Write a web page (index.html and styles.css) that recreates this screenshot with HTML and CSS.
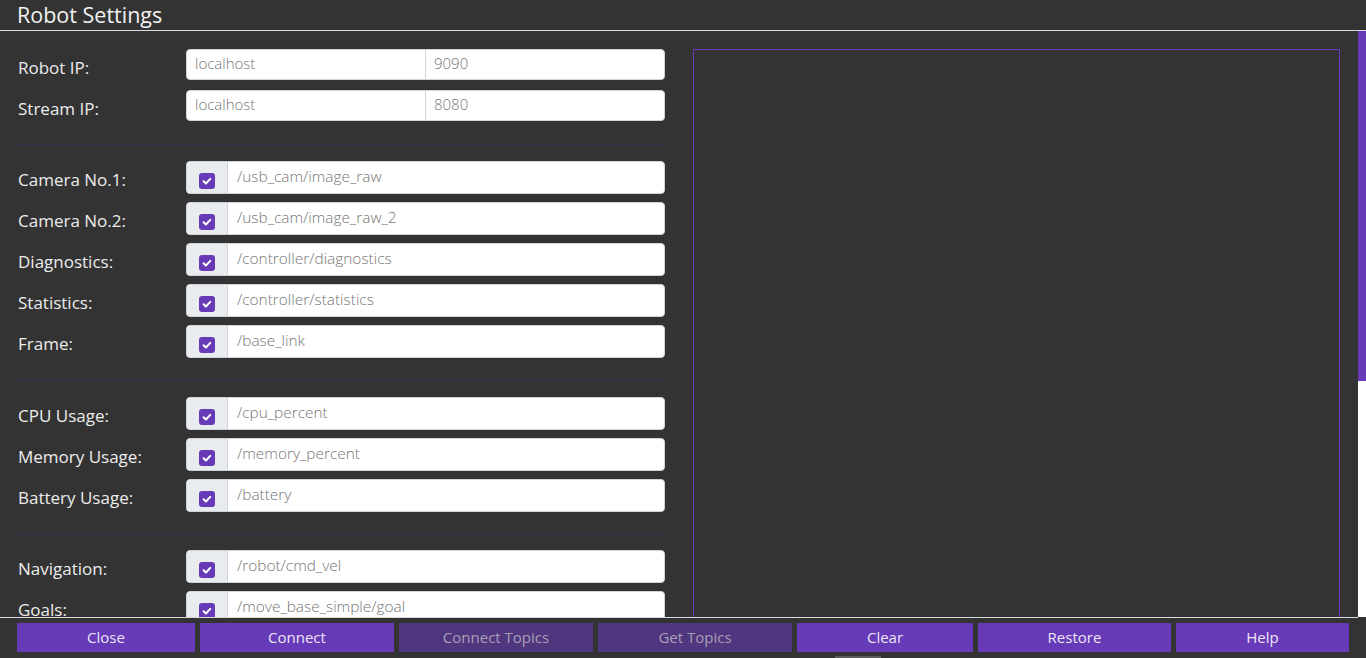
FILE: index.html
```html
<!DOCTYPE html>
<html lang="en">
<head>
<meta charset="utf-8">
<title>Robot Settings</title>
<link rel="stylesheet" href="styles.css">
</head>
<body>
<header class="topbar">
  <h1 class="title">Robot Settings</h1>
</header>
<main class="scroller">
  <div class="content">
    <section class="form-col">
      <div class="row">
        <label class="label">Robot IP:</label>
        <div class="group ip">
          <span class="field half">localhost</span>
          <span class="field half">9090</span>
        </div>
      </div>
      <div class="row">
        <label class="label">Stream IP:</label>
        <div class="group ip">
          <span class="field half">localhost</span>
          <span class="field half">8080</span>
        </div>
      </div>
      <hr class="divider">
      <div class="row">
        <label class="label">Camera No.1:</label>
        <div class="group"><span class="addon"><span class="check"><svg viewBox="0 0 16 16"><path d="M4.6 8.3l2.3 2.2 4.4-4.6"/></svg></span></span><span class="field">/usb_cam/image_raw</span></div>
      </div>
      <div class="row">
        <label class="label">Camera No.2:</label>
        <div class="group"><span class="addon"><span class="check"><svg viewBox="0 0 16 16"><path d="M4.6 8.3l2.3 2.2 4.4-4.6"/></svg></span></span><span class="field">/usb_cam/image_raw_2</span></div>
      </div>
      <div class="row">
        <label class="label">Diagnostics:</label>
        <div class="group"><span class="addon"><span class="check"><svg viewBox="0 0 16 16"><path d="M4.6 8.3l2.3 2.2 4.4-4.6"/></svg></span></span><span class="field">/controller/diagnostics</span></div>
      </div>
      <div class="row">
        <label class="label">Statistics:</label>
        <div class="group"><span class="addon"><span class="check"><svg viewBox="0 0 16 16"><path d="M4.6 8.3l2.3 2.2 4.4-4.6"/></svg></span></span><span class="field">/controller/statistics</span></div>
      </div>
      <div class="row">
        <label class="label">Frame:</label>
        <div class="group"><span class="addon"><span class="check"><svg viewBox="0 0 16 16"><path d="M4.6 8.3l2.3 2.2 4.4-4.6"/></svg></span></span><span class="field">/base_link</span></div>
      </div>
      <hr class="divider wide">
      <div class="row">
        <label class="label">CPU Usage:</label>
        <div class="group"><span class="addon"><span class="check"><svg viewBox="0 0 16 16"><path d="M4.6 8.3l2.3 2.2 4.4-4.6"/></svg></span></span><span class="field">/cpu_percent</span></div>
      </div>
      <div class="row">
        <label class="label">Memory Usage:</label>
        <div class="group"><span class="addon"><span class="check"><svg viewBox="0 0 16 16"><path d="M4.6 8.3l2.3 2.2 4.4-4.6"/></svg></span></span><span class="field">/memory_percent</span></div>
      </div>
      <div class="row">
        <label class="label">Battery Usage:</label>
        <div class="group"><span class="addon"><span class="check"><svg viewBox="0 0 16 16"><path d="M4.6 8.3l2.3 2.2 4.4-4.6"/></svg></span></span><span class="field">/battery</span></div>
      </div>
      <hr class="divider">
      <div class="row">
        <label class="label">Navigation:</label>
        <div class="group"><span class="addon"><span class="check"><svg viewBox="0 0 16 16"><path d="M4.6 8.3l2.3 2.2 4.4-4.6"/></svg></span></span><span class="field">/robot/cmd_vel</span></div>
      </div>
      <div class="row">
        <label class="label">Goals:</label>
        <div class="group"><span class="addon"><span class="check"><svg viewBox="0 0 16 16"><path d="M4.6 8.3l2.3 2.2 4.4-4.6"/></svg></span></span><span class="field">/move_base_simple/goal</span></div>
      </div>
    </section>
    <section class="preview"></section>
  </div>
  <div class="vscroll" aria-hidden="true">
    <div class="thumb"></div>
    <div class="track"></div>
  </div>
</main>
<footer class="footer">
  <div class="buttons">
    <button class="btn b-close">Close</button>
    <button class="btn b-connect">Connect</button>
    <button class="btn b-topics disabled">Connect Topics</button>
    <button class="btn b-get disabled">Get Topics</button>
    <button class="btn b-clear">Clear</button>
    <button class="btn b-restore">Restore</button>
    <button class="btn b-help">Help</button>
  </div>
  <div class="grip"></div>
</footer>
</body>
</html>
```

FILE: styles.css
```css
* { box-sizing: border-box; }
html, body { margin: 0; height: 100%; }
body {
  background: #333333;
  color: #eeeeee;
  font-family: "Open Sans", "Noto Sans", sans-serif;
  display: flex;
  flex-direction: column;
  overflow: hidden;
}
.topbar {
  height: 31px;
  border-bottom: 1px solid #d9d9d9;
  padding-left: 17px;
  flex: none;
}
.title {
  margin: 0;
  font-size: 21.5px;
  font-weight: 400;
  line-height: 30px;
  color: #f2f2f2;
}
.scroller {
  flex: 1;
  min-height: 0;
  display: flex;
  overflow: hidden;
}
.content {
  flex: 1;
  display: flex;
  gap: 28px;
  padding: 18px 0 0 18px;
  overflow: hidden;
}
.vscroll {
  width: 8px;
  flex: none;
  display: flex;
  flex-direction: column;
}
.thumb { height: 350px; background: #673ab7; flex: none; }
.track { flex: 1; background: #ffffff; }
.form-col { width: 647px; flex: none; }
.row {
  display: flex;
  align-items: center;
  height: 33px;
  margin-bottom: 8px;
}
.label {
  width: 168px;
  flex: none;
  font-size: 17px;
  color: #ececec;
  padding-top: 3px;
}
.group {
  flex: 1;
  display: flex;
  height: 33px;
  background: #ffffff;
  border: 1px solid #ced4da;
  border-radius: 4px;
  overflow: hidden;
}
.group.ip { height: 31px; align-self: flex-start; }
.addon {
  width: 41px;
  flex: none;
  background: #e9ecef;
  border-right: 1px solid #ced4da;
  display: flex;
  justify-content: center;
  padding-top: 11px;
}
.check {
  width: 16px;
  height: 16px;
  border-radius: 3px;
  background: #673ab7;
  display: block;
}
.check svg {
  width: 16px;
  height: 16px;
  display: block;
  fill: none;
  stroke: #ffffff;
  stroke-width: 2;
  stroke-linecap: round;
  stroke-linejoin: round;
}
.field {
  flex: 1;
  font-size: 15.4px;
  font-weight: 300;
  color: #767676;
  padding: 5px 0 0 9px;
  line-height: 20px;
  white-space: nowrap;
}
.field.half { font-size: 15px; padding-left: 8px; padding-top: 3px; }
.field.half + .field.half { border-left: 1px solid #ced4da; }
.divider {
  border: 0;
  border-top: 1px solid #3b3059;
  margin: 21px 0 16px 0;
}
.divider.wide { margin-top: 22px; }
.preview {
  width: 647px;
  flex: none;
  border: 1px solid #673ab7;
  min-height: 963px;
}
.footer {
  flex: none;
  height: 41px;
  margin-right: 8px;
  border-top: 1px solid #d9d9d9;
  padding: 5px 0 0 17px;
}
.buttons { display: flex; gap: 5px; }
.btn {
  height: 29px;
  border: 0;
  padding: 0 0 2px 0;
  background: #673ab7;
  color: #ece6f6;
  font-family: "Open Sans", "Noto Sans", sans-serif;
  font-size: 15px;
  font-weight: 400;
  flex: none;
}
.btn.disabled { background: #50367f; color: #a79fb6; }
.b-close { width: 178px; }
.b-connect { width: 194px; }
.b-topics { width: 194px; }
.b-get { width: 194px; }
.b-clear { width: 176px; }
.b-restore { width: 193px; }
.b-help { width: 173px; }
.grip {
  margin: 4px 0 0 818px;
  width: 46px;
  height: 2px;
  background: #5c5c5c;
}
```
